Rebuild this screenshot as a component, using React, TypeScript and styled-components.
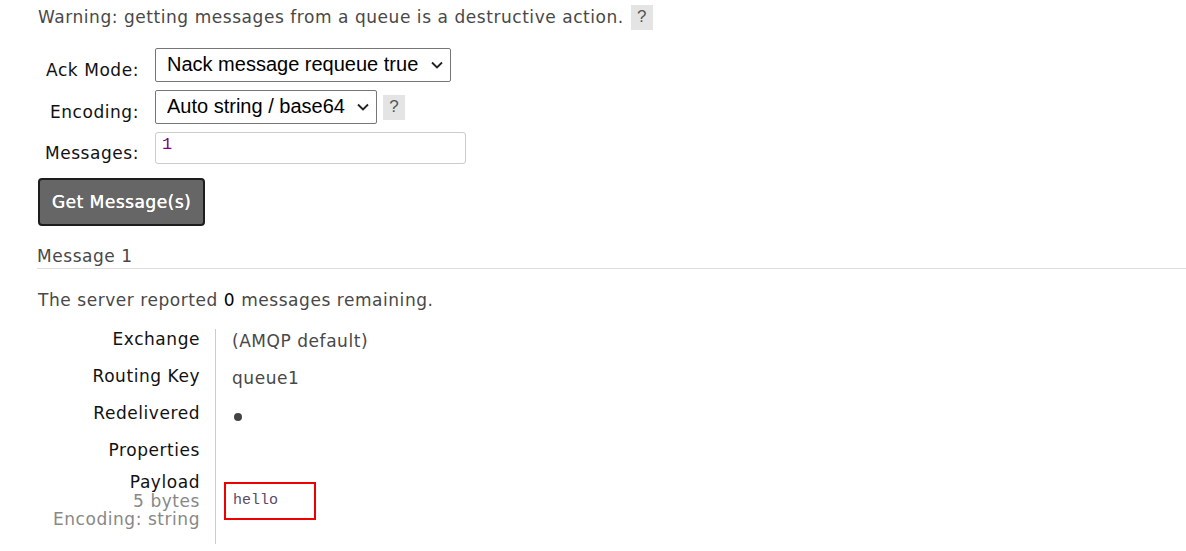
import React from "react";
import styled, { createGlobalStyle } from "styled-components";

const Global = createGlobalStyle`
  html, body { margin: 0; padding: 0; background: #fff; }
  body {
    font-family: "DejaVu Sans", Verdana, sans-serif;
    font-size: 17px;
    letter-spacing: 0.55px;
    color: #484848;
  }
`;

const Page = styled.div`
  padding: 4px 0 0 38px;
  display: flex;
  flex-direction: column;
`;

const WarningLine = styled.p`
  margin: 0;
  display: flex;
  align-items: center;
  gap: 7px;
  height: 26px;
  line-height: 26px;
`;

const Help = styled.span`
  display: inline-flex;
  align-items: center;
  justify-content: center;
  width: 22px;
  height: 25px;
  background: #e4e4e4;
  color: #555;
  font-family: "Liberation Sans", Arial, sans-serif;
  font-size: 17px;
  letter-spacing: 0;
`;

const Form = styled.div`
  display: grid;
  grid-template-columns: 101px auto;
  column-gap: 16px;
  row-gap: 8px;
  margin-top: 18px;
  align-items: center;
`;

const Label = styled.label`
  text-align: right;
  color: #111;
  padding-top: 10px;
`;

const FieldRow = styled.div`
  display: flex;
  align-items: center;
  gap: 6px;
`;

const SelectWrap = styled.div`
  position: relative;
  display: inline-flex;
`;

const Select = styled.select<{ $w: number }>`
  appearance: none;
  width: ${(p) => p.$w}px;
  height: 34px;
  font-family: "Liberation Sans", Arial, sans-serif;
  font-size: 20px;
  letter-spacing: 0;
  color: #000;
  border: 1px solid #767676;
  border-radius: 2px;
  background: #fff;
  padding: 0 30px 2px 11px;
  outline: none;
`;

const Chevron = styled.svg`
  position: absolute;
  right: 8px;
  top: 13px;
  width: 12px;
  height: 8px;
  pointer-events: none;
`;

const Input = styled.input`
  width: 311px;
  height: 32px;
  box-sizing: border-box;
  border: 1px solid #ccc;
  border-radius: 3px;
  font-family: "Liberation Mono", "Courier New", monospace;
  font-size: 17px;
  letter-spacing: 0;
  color: #800080;
  padding: 0 0 8px 6px;
  outline: none;
`;

const Button = styled.button`
  margin-top: 14px;
  align-self: flex-start;
  width: 167px;
  height: 48px;
  background: #666;
  color: #fff;
  border: 2px solid #1d1d1d;
  border-radius: 4px;
  font-family: "DejaVu Sans", Verdana, sans-serif;
  font-size: 17px;
  letter-spacing: 0.5px;
  padding: 0;
  text-shadow: 0.3px 0 0 #fff;
`;

const SectionTitle = styled.h3`
  margin: 19px 0 0 -1px;
  font-weight: normal;
  font-size: 17px;
  color: #484848;
  padding-bottom: 1px;
  border-bottom: 1px solid #ddd;
  line-height: 22px;
`;

const Summary = styled.p`
  margin: 20px 0 0 0;
  line-height: 22px;
  b { color: #000; font-weight: normal; }
`;

const Details = styled.div`
  display: grid;
  grid-template-columns: 178px auto;
  margin-top: 18px;
`;

const Key = styled.div<{ $h: number; $lh?: number }>`
  text-align: right;
  color: #111;
  padding: 0 15px 0 0;
  border-right: 1px solid #ccc;
  height: ${(p) => p.$h}px;
  line-height: ${(p) => p.$lh ?? 20}px;
  box-sizing: border-box;
`;

const Sub = styled.div`
  color: #888;
  line-height: 18.5px;
`;

const Value = styled.div<{ $pl?: number }>`
  padding: 2px 0 0 ${(p) => p.$pl ?? 16}px;
  line-height: 20px;
`;

const Dot = styled.span`
  display: inline-block;
  width: 8px;
  height: 8px;
  border-radius: 50%;
  background: #444;
  margin: 6px 0 0 2px;
`;

const Payload = styled.pre`
  margin: 7px 0 0 1px;
  width: 92px;
  height: 38px;
  box-sizing: border-box;
  border: 2px solid #e00;
  padding: 8px 0 0 7px;
  font-family: "Liberation Mono", "Courier New", monospace;
  font-size: 15px;
  letter-spacing: 0;
  line-height: 18px;
  color: #5a4a68;
`;

function ChevronIcon() {
  return (
    <Chevron viewBox="0 0 12 8">
      <path d="M1 1.5 L6 6.5 L11 1.5" fill="none" stroke="#222" strokeWidth="1.8" />
    </Chevron>
  );
}

export default function App() {
  return (
    <>
      <Global />
      <Page>
        <WarningLine>
          Warning: getting messages from a queue is a destructive action.
          <Help>?</Help>
        </WarningLine>
        <Form>
          <Label>Ack Mode:</Label>
          <FieldRow>
            <SelectWrap>
              <Select $w={296} defaultValue="nack">
                <option value="nack">Nack message requeue true</option>
              </Select>
              <ChevronIcon />
            </SelectWrap>
          </FieldRow>
          <Label>Encoding:</Label>
          <FieldRow>
            <SelectWrap>
              <Select $w={222} defaultValue="auto">
                <option value="auto">Auto string / base64</option>
              </Select>
              <ChevronIcon />
            </SelectWrap>
            <Help>?</Help>
          </FieldRow>
          <Label>Messages:</Label>
          <FieldRow>
            <Input defaultValue="1" />
          </FieldRow>
        </Form>
        <Button>Get Message(s)</Button>
        <SectionTitle>Message 1</SectionTitle>
        <Summary>
          The server reported <b>0</b> messages remaining.
        </Summary>
        <Details>
          <Key $h={37}>Exchange</Key>
          <Value>(AMQP default)</Value>
          <Key $h={37}>Routing Key</Key>
          <Value>queue1</Value>
          <Key $h={37}>Redelivered</Key>
          <Value>
            <Dot />
          </Value>
          <Key $h={33}>Properties</Key>
          <Value />
          <Key $h={71} $lh={18.5}>
            Payload
            <Sub>5 bytes</Sub>
            <Sub>Encoding: string</Sub>
          </Key>
          <Value $pl={7}>
            <Payload>hello</Payload>
          </Value>
        </Details>
      </Page>
    </>
  );
}
